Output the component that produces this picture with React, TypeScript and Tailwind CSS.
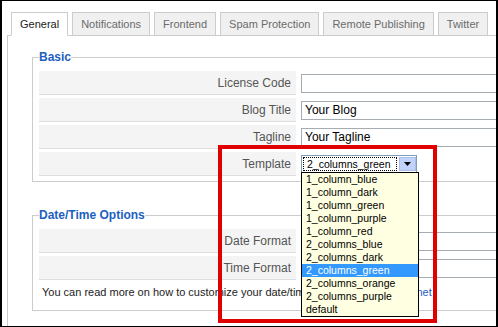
import type { ReactNode } from "react"

const tabs = ["General", "Notifications", "Frontend", "Spam Protection", "Remote Publishing", "Twitter"]

const templates = [
  "1_column_blue",
  "1_column_dark",
  "1_column_green",
  "1_column_purple",
  "1_column_red",
  "2_columns_blue",
  "2_columns_dark",
  "2_columns_green",
  "2_columns_orange",
  "2_columns_purple",
  "default",
]

function Row({ label, children }: { label: string; children?: ReactNode }) {
  return (
    <div className="flex items-center">
      <div className="w-[257px] h-[24px] shrink-0 bg-[#f4f4f4] border-b border-[#dedede] flex items-center justify-end pr-[5px] text-[12px] text-[#555]">
        {label}
      </div>
      <div className="ml-[5px] flex items-center">{children}</div>
    </div>
  )
}

function TextInput({ value }: { value: string }) {
  return (
    <input
      readOnly
      value={value}
      className="w-[260px] h-[19px] border border-[#a5acb2] bg-white pl-[3px] text-[12px] text-black outline-none"
    />
  )
}

function TemplateSelect() {
  return (
    <div className="relative w-[116px] h-[18px] border border-[#7f9db9] bg-white flex items-center">
      <div className="flex-1 h-[14px] ml-[1px] mr-[2px] border border-dotted border-black pl-[3px] text-[10.5px] leading-[12px] text-black">
        2_columns_green
      </div>
      <div className="w-[17px] h-[14px] bg-[#c1d3fb] border border-[#a9bde8] flex items-center justify-center">
        <svg width="7" height="4" viewBox="0 0 7 4">
          <path d="M0 0h7L3.5 4z" fill="#000" />
        </svg>
      </div>
      <div className="absolute left-[-1px] top-full w-[118px] border border-black bg-[#ffffe1] z-10">
        {templates.map((t) => (
          <div
            key={t}
            className={
              t === "2_columns_green"
                ? "h-[13px] leading-[13px] pl-[4px] text-[10.5px] bg-[#3399ff] text-white"
                : "h-[13px] leading-[13px] pl-[4px] text-[10.5px] text-black"
            }
          >
            {t}
          </div>
        ))}
      </div>
    </div>
  )
}

export default function App() {
  return (
    <div className="relative w-[498px] h-[327px] overflow-hidden bg-white border-l-2 border-r-2 border-t border-b border-black font-['Liberation_Sans',Arial,sans-serif]">
      <div className="relative z-10 flex gap-[4px] ml-[5px] pl-[4px] pt-[11px] -mb-px">
        {tabs.map((t, i) => (
          <div
            key={t}
            className={
              i === 0
                ? "h-[24px] px-[8px] flex items-center whitespace-nowrap text-[11px] text-[#222] bg-white border border-[#ccc] border-b-white"
                : "h-[24px] px-[8px] flex items-center whitespace-nowrap text-[11px] text-[#6b6b6b] bg-[#f0f0f0] border border-[#ccc]"
            }
          >
            {t}
          </div>
        ))}
      </div>

      <div className="ml-[5px] w-[600px] border-l border-t border-[#ccc] pt-[13px] pl-[24px] pb-[20px]">
        <fieldset className="w-[560px] border border-[#ccc] pl-[6px] pr-[6px] pt-[6px] pb-[5px]">
          <legend className="px-0 text-[12px] leading-[16px] font-bold text-[#1d5fbf]">Basic</legend>
          <div className="flex flex-col gap-[3px]">
            <Row label="License Code">
              <TextInput value="" />
            </Row>
            <Row label="Blog Title">
              <TextInput value="Your Blog" />
            </Row>
            <Row label="Tagline">
              <TextInput value="Your Tagline" />
            </Row>
            <Row label="Template">
              <TemplateSelect />
            </Row>
          </div>
        </fieldset>

        <fieldset className="mt-[25px] w-[560px] border border-[#ccc] pl-[6px] pr-[6px] pt-[6px] pb-0">
          <legend className="px-0 text-[12px] leading-[16px] font-bold text-[#1d5fbf]">Date/Time Options</legend>
          <div className="flex flex-col gap-[3px]">
            <Row label="Date Format">
              <TextInput value="F j, Y" />
            </Row>
            <Row label="Time Format">
              <TextInput value="g:i a" />
            </Row>
            <div className="h-[27px] pt-[2px] pl-[3px] text-[11px] leading-[14px] text-[#222] whitespace-nowrap">
              You can read more on how to customize your date/time formats on{" "}
              <span className="text-[#1d5fbf]">www.php.net</span>
            </div>
          </div>
        </fieldset>
      </div>

      <div className="absolute z-20 left-[216px] top-[144px] w-[219px] h-[178px] border-4 border-[#e00000]" />
    </div>
  )
}
